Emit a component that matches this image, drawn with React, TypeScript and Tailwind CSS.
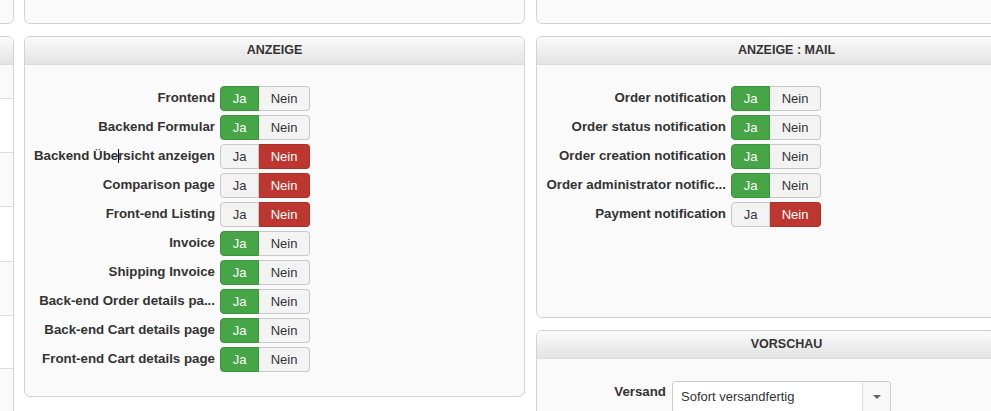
import React from "react";

const Panel = ({
  title,
  className = "",
  children,
}: {
  title?: string;
  className?: string;
  children?: React.ReactNode;
}) => (
  <div
    className={`shrink-0 w-[501px] rounded-[6px] border border-[#d3d3d3] bg-[#fafafa] overflow-hidden ${className}`}
  >
    {title !== undefined && (
      <div className="h-[28px] border-b border-[#dcdcdc] bg-gradient-to-b from-[#fbfbfb] to-[#e3e3e3] flex items-center justify-center text-[12.5px] font-bold text-[#333]">
        {title}
      </div>
    )}
    {children}
  </div>
);

const Toggle = ({ on }: { on: boolean }) => (
  <div className="flex h-[25px] text-[13px] leading-none shrink-0">
    {on ? (
      <span className="w-[39px] flex items-center justify-center rounded-l-[4px] border border-[#3c933c] bg-[#46a546] text-white">
        Ja
      </span>
    ) : (
      <span className="w-[39px] flex items-center justify-center rounded-l-[4px] border border-[#c8c8c8] bg-[#f3f3f3] text-[#333]">
        Ja
      </span>
    )}
    {on ? (
      <span className="w-[51px] flex items-center justify-center rounded-r-[4px] border border-l-0 border-[#c8c8c8] bg-[#f3f3f3] text-[#333]">
        Nein
      </span>
    ) : (
      <span className="w-[51px] flex items-center justify-center rounded-r-[4px] border border-l-0 border-[#a8302a] bg-[#bd362f] text-white">
        Nein
      </span>
    )}
  </div>
);

const Row = ({ label, on }: { label: React.ReactNode; on: boolean }) => (
  <div className="flex items-center h-[25px] mb-[4px]">
    <div className="w-[180px] flex justify-end">
      <span className="shrink-0 whitespace-nowrap text-[13.3px] font-bold text-[#333] leading-none -mt-[2px]">
        {label}
      </span>
    </div>
    <div className="w-[5px] shrink-0" />
    <Toggle on={on} />
  </div>
);

export default function App() {
  const anzeige: [React.ReactNode, boolean][] = [
    ["Frontend", true],
    ["Backend Formular", true],
    [
      <>
        Backend Übe
        <span className="inline-block w-0 h-[14px] border-l border-black align-[-3px] -mr-px" />
        rsicht anzeigen
      </>,
      false,
    ],
    ["Comparison page", false],
    ["Front-end Listing", false],
    ["Invoice", true],
    ["Shipping Invoice", true],
    ["Back-end Order details pa...", true],
    ["Back-end Cart details page", true],
    ["Front-end Cart details page", true],
  ];
  const mail: [string, boolean][] = [
    ["Order notification", true],
    ["Order status notification", true],
    ["Order creation notification", true],
    ["Order administrator notific...", true],
    ["Payment notification", false],
  ];

  return (
    <div className="w-[991px] h-[411px] overflow-hidden bg-white font-['Liberation_Sans',Arial,sans-serif] text-[#333]">
      {/* top row (cut off) */}
      <div className="flex -mt-[36px]">
        <Panel className="h-[60px] ml-[-487px]" />
        <Panel className="h-[60px] ml-[10px]" />
        <Panel className="h-[60px] ml-[11px]" />
      </div>

      <div className="flex items-start mt-[12px]">
        {/* left column (cut off) */}
        <Panel title="" className="h-[400px] ml-[-487px]">
          <div className="h-[34px] border-b border-[#dedede]" />
          <div className="h-[54px] border-b border-[#dedede] bg-white" />
          <div className="h-[54px] border-b border-[#dedede]" />
          <div className="h-[55px] border-b border-[#dedede] bg-white" />
          <div className="h-[54px] border-b border-[#dedede]" />
          <div className="h-[53px] border-b border-[#dedede] bg-white" />
        </Panel>

        {/* ANZEIGE */}
        <Panel title="ANZEIGE" className="h-[361px] ml-[10px]">
          <div className="pt-[21px] pl-[10px]">
            {anzeige.map(([l, on], i) => (
              <Row key={i} label={l} on={on} />
            ))}
          </div>
        </Panel>

        {/* right column */}
        <div className="shrink-0 ml-[11px] flex flex-col">
          <Panel title="ANZEIGE : MAIL" className="h-[282px]">
            <div className="pt-[21px] pl-[9px]">
              {mail.map(([l, on], i) => (
                <Row key={i} label={l} on={on} />
              ))}
            </div>
          </Panel>
          <Panel title="VORSCHAU" className="h-[200px] mt-[12px]">
            <div className="pt-[22px] pl-[11px] flex items-start">
              <div className="w-[118px] text-right text-[13.3px] font-bold text-[#333] pt-[1px]">
                Versand
              </div>
              <div className="ml-[6px] w-[219px] h-[32px] flex border border-[#cccccc] rounded-[3px] bg-white">
                <div className="flex-1 flex items-center pl-[8px] text-[13px] text-[#333]">
                  Sofort versandfertig
                </div>
                <div className="w-[28px] border-l border-[#dddddd] bg-[#f8f8f8] flex items-center justify-center rounded-r-[3px]">
                  <svg width="8" height="4" viewBox="0 0 8 4">
                    <path d="M0 0 L8 0 L4 4 Z" fill="#666" />
                  </svg>
                </div>
              </div>
            </div>
          </Panel>
        </div>
      </div>
    </div>
  );
}
